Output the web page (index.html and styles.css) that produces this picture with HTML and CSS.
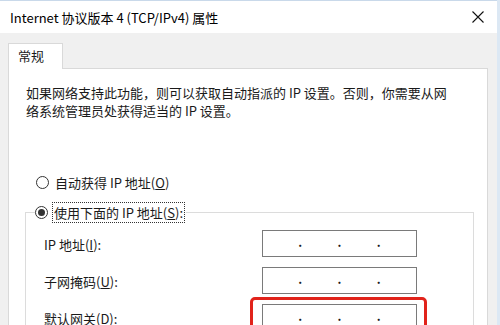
FILE: index.html
```html
<!DOCTYPE html>
<html lang="zh-CN">
<head>
    <meta charset="UTF-8">
    <title>Internet 协议版本 4 (TCP/IPv4) 属性</title>
    <link rel="stylesheet" href="styles.css">
</head>
<body>
    <div class="window">
        <div class="titlebar">
            <span class="title">Internet 协议版本 4 (TCP/IPv4) 属性</span>
            <svg class="close" width="12" height="12" viewBox="0 0 12 12">
                <path d="M0.5 0.5 L11.5 11.5 M11.5 0.5 L0.5 11.5" stroke="#111" stroke-width="1.1" fill="none"/>
            </svg>
        </div>

        <div class="content">
            <div class="tabs">
                <div class="tab">常规</div>
            </div>
            <div class="panel">
                <p class="intro">如果网络支持此功能，则可以获取自动指派的 IP 设置。否则，你需要从网络系统管理员处获得适当的 IP 设置。</p>

                <div class="radio-row">
                    <span class="radio"></span>
                    <span>自动获得 IP 地址(<u>O</u>)</span>
                </div>

                <fieldset class="group">
                    <legend class="radio-row">
                        <span class="radio checked"></span>
                        <span class="focus">使用下面的 IP 地址(<u>S</u>):</span>
                    </legend>
                    <div class="field">
                        <label>IP 地址(<u>I</u>):</label>
                        <div class="ipbox"><span>.</span><span>.</span><span>.</span></div>
                    </div>
                    <div class="field">
                        <label>子网掩码(<u>U</u>):</label>
                        <div class="ipbox"><span>.</span><span>.</span><span>.</span></div>
                    </div>
                    <div class="field">
                        <label>默认网关(<u>D</u>):</label>
                        <div class="ipbox marked"><span>.</span><span>.</span><span>.</span></div>
                    </div>
                </fieldset>
            </div>
        </div>
    </div>
</body>
</html>
```

FILE: styles.css
```css
* {
    box-sizing: border-box;
}

body {
    margin: 0;
    font-family: "Noto Sans CJK SC", "Noto Sans", sans-serif;
    font-size: 13px;
    color: #1a1a1a;
}

.window {
    width: 500px;
    height: 325px;
    overflow: hidden;
    background-color: #f0f0f0;
    border-right: 3px solid #dce8f4;
}

.titlebar {
    height: 33px;
    background-color: #fff;
    border-top: 1px solid #c9d9ea;
    display: flex;
    align-items: center;
    justify-content: space-between;
    padding: 0 13px 0 10px;
}

.title {
    font-size: 13px;
    color: #000;
}

.content {
    padding: 10px 9px 0 8px;
}

.tabs {
    display: flex;
}

.tab {
    width: 55px;
    height: 26px;
    margin-bottom: -1px;
    padding: 2px 0 0 9px;
    background-color: #fff;
    border: 1px solid #d9d9d9;
    border-bottom: none;
    position: relative;
    z-index: 1;
}

.panel {
    background-color: #fff;
    border: 1px solid #d9d9d9;
    height: 300px;
    padding: 15px 14px 0 17px;
}

.intro {
    margin: 0;
    line-height: 18px;
    width: 430px;
}

.radio-row {
    display: flex;
    align-items: center;
    gap: 6px;
    height: 20px;
}

.panel > .radio-row {
    margin: 52px 0 10px 10px;
}

.radio {
    width: 13px;
    height: 13px;
    border: 1px solid #333;
    border-radius: 50%;
    display: flex;
    align-items: center;
    justify-content: center;
}

.radio.checked::after {
    content: "";
    width: 7px;
    height: 7px;
    border-radius: 50%;
    background-color: #333;
}

.focus {
    outline: 1px dotted #333;
    padding: 0 1px;
    margin-left: -1px;
}

.group {
    margin: 0 0 0 -1px;
    padding: 8px 0 0 18px;
    border: 1px solid #dcdcdc;
    border-bottom: none;
    width: 449px;
}

.group legend {
    padding: 0 2px 0 0;
    margin-left: -9px;
}

.field {
    display: grid;
    grid-template-columns: 218px 155px;
    align-items: center;
    margin-bottom: 10px;
}

.field label {
    padding-top: 2px;
    line-height: 18px;
}

.ipbox {
    height: 27px;
    border: 1px solid #7a7a7a;
    display: flex;
    align-items: center;
    justify-content: space-evenly;
    font-size: 12px;
    font-weight: bold;
    line-height: 1;
    padding-bottom: 4px;
    position: relative;
}

.ipbox.marked::before {
    content: "";
    position: absolute;
    left: -13px;
    right: -11px;
    top: -8px;
    height: 60px;
    border: 3px solid #e1231b;
    border-radius: 5px;
}
```
